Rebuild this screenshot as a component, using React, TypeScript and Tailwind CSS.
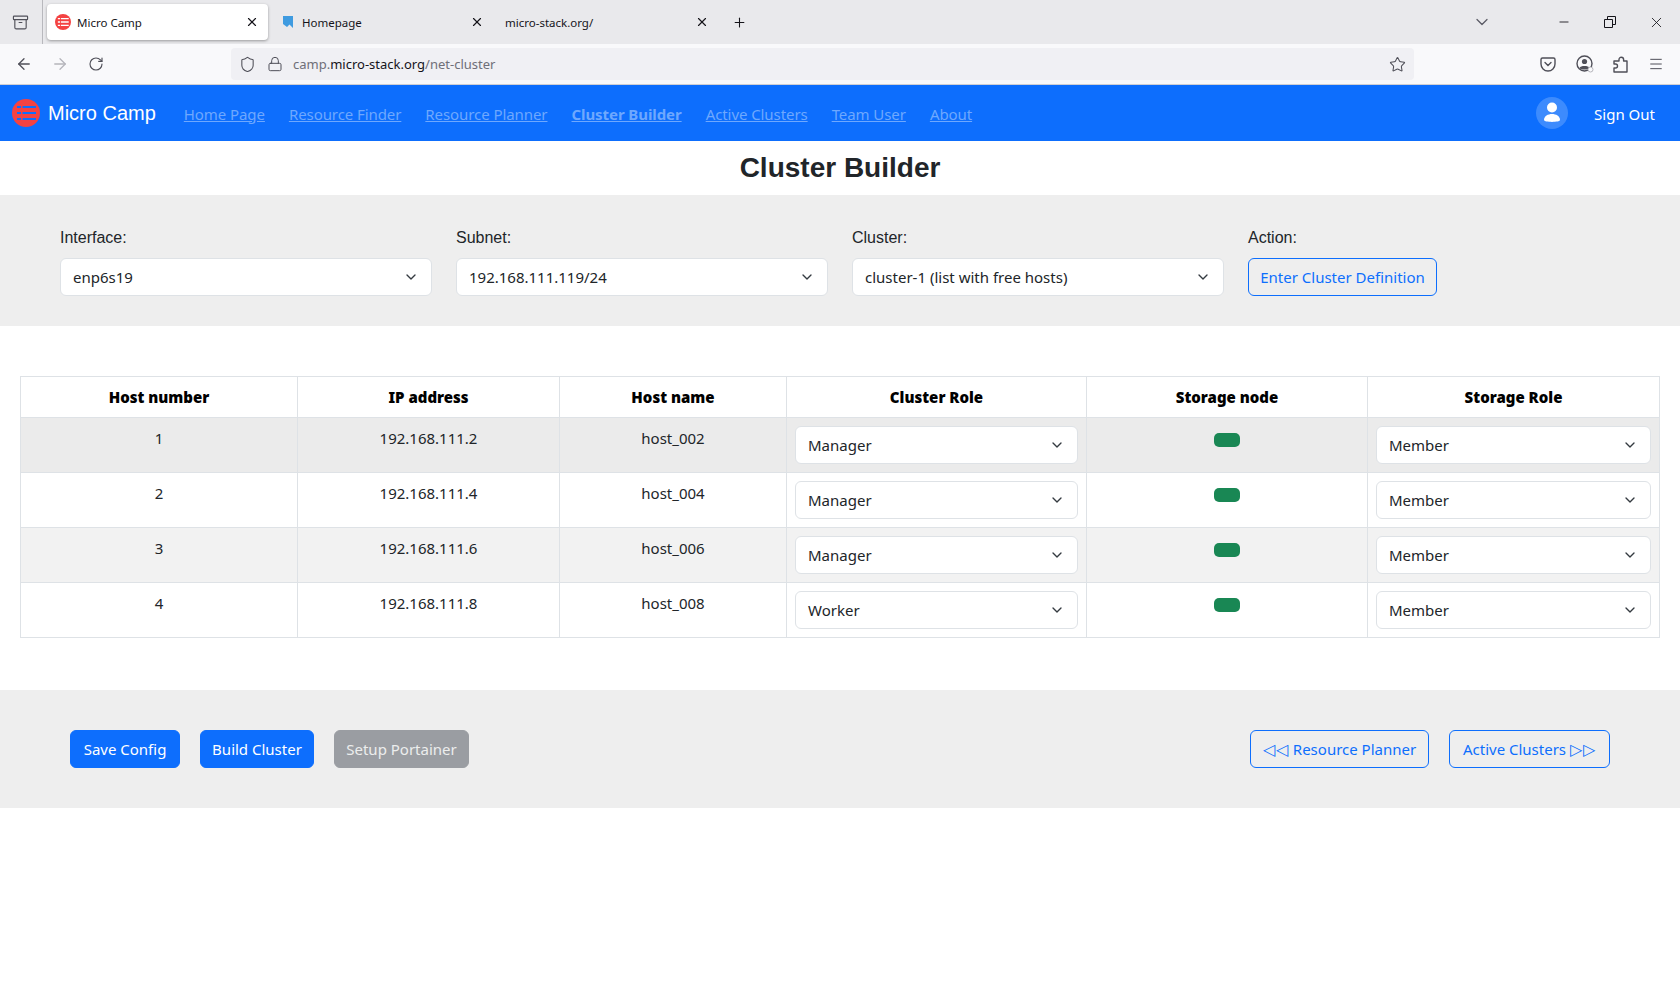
import { ChevronDown, X, Plus, Minus, ArrowLeft, ArrowRight, RotateCw, Shield, Lock, Star, Menu, Archive } from "lucide-react";

const ui = "font-['Noto_Sans',sans-serif]";

const hosts = [
  { n: 1, ip: "192.168.111.2", name: "host_002", role: "Manager", bg: "bg-[#ebebeb]" },
  { n: 2, ip: "192.168.111.4", name: "host_004", role: "Manager", bg: "bg-white" },
  { n: 3, ip: "192.168.111.6", name: "host_006", role: "Manager", bg: "bg-[#f2f2f2]" },
  { n: 4, ip: "192.168.111.8", name: "host_008", role: "Worker", bg: "bg-white" },
];

function Logo({ size, lines }: { size: number; lines: string }) {
  return (
    <svg width={size} height={size} viewBox="0 0 28 28" className="shrink-0">
      <circle cx="14" cy="14" r="14" fill="#f44242" />
      <g stroke={lines} strokeWidth="2.2">
        <path d="M10.500 8h13.500M10.500 14h13.500M10.500 20h13.500" />
        <path d="M5 8h4M5 14h4M5 20h4" />
      </g>
    </svg>
  );
}

function Tab({ active, icon, title }: { active?: boolean; icon?: React.ReactNode; title: string }) {
  return (
    <div
      className={`flex h-9 w-[221px] items-center rounded pl-2 pr-2 ${
        active ? "bg-white shadow-[0_1px_3px_rgba(0,0,0,0.35)]" : ""
      }`}
    >
      {icon && <span className="mr-1.5 flex w-4 justify-center">{icon}</span>}
      <span className="flex-1 pt-px text-[11.5px] text-[#15141a]">{title}</span>
      <X size={14} strokeWidth={2} className="mr-[1px] text-[#15141a]" />
    </div>
  );
}

function Select({ value }: { value: string }) {
  return (
    <div className="flex h-[38px] w-full items-center justify-between rounded-md border border-[#dee2e6] bg-white pl-3 pr-3 text-[15px] text-[#212529]">
      <span>{value}</span>
      <ChevronDown size={16} strokeWidth={2} className="text-[#343a40]" />
    </div>
  );
}

function Btn({ children, kind, width }: { children: React.ReactNode; kind: "primary" | "outline" | "disabled"; width: string }) {
  const cls =
    kind === "primary"
      ? "border-[#0d6efd] bg-[#0d6efd] text-white"
      : kind === "disabled"
        ? "border-[#9a9da2] bg-[#9a9da2] text-[#eceded]"
        : "border-[#0d6efd] text-[#0d6efd]";
  return (
    <div className={`flex h-[38px] items-center justify-center whitespace-nowrap rounded-md border text-[15px] ${width} ${cls}`}>
      {children}
    </div>
  );
}

export default function App() {
  const links = ["Home Page", "Resource Finder", "Resource Planner", "Cluster Builder", "Active Clusters", "Team User", "About"];
  return (
    <div className={`min-h-[1002px] bg-white ${ui}`}>
      {/* browser tabs */}
      <div className="flex h-11 items-center bg-[#e9e9ec]">
        <div className="flex h-full w-[43px] items-center justify-center border-r border-[#b8b8bd] pr-[2px]">
          <Archive size={17} strokeWidth={1.6} className="text-[#4f4f58]" />
        </div>
        <div className="ml-1 flex gap-1">
          <Tab active title="Micro Camp" icon={<Logo size={16} lines="#ffffff" />} />
          <Tab
            title="Homepage"
            icon={
              <svg width="12" height="14" viewBox="0 0 12 14">
                <path d="M1 1h10v12L7.500 9.500 5 12 1 9z" fill="#3f9be0" />
              </svg>
            }
          />
          <Tab title="micro-stack.org/" />
        </div>
        <Plus size={15} strokeWidth={1.7} className="ml-[14px] text-[#15141a]" />
        <ChevronDown size={20} strokeWidth={1.5} className="ml-[725px] text-[#5b5b66]" />
        <Minus size={14} strokeWidth={1.5} className="ml-[65px] text-[#15141a]" />
        <svg width="12" height="12" viewBox="0 0 12 12" fill="none" stroke="#15141a" className="ml-[33px]">
          <path d="M.5 3.500h8v8h-8zM3.500 3.500v-3h8v8h-3" />
        </svg>
        <X size={17} strokeWidth={1.2} className="ml-[32px] text-[#15141a]" />
      </div>

      {/* browser toolbar */}
      <div className="flex h-[41px] items-center border-b border-[#cfcfd4] bg-[#f9f9fb]">
        <ArrowLeft size={18} strokeWidth={1.7} className="ml-[15px] text-[#4f4f58]" />
        <ArrowRight size={18} strokeWidth={1.7} className="ml-[18px] text-[#b5b5bb]" />
        <RotateCw size={16} strokeWidth={1.7} className="ml-[19px] text-[#4f4f58]" />
        <div className="ml-[127px] flex h-8 w-[1183px] items-center rounded bg-[#f0f0f4] pl-2 pr-2">
          <Shield size={17} strokeWidth={1.5} className="text-[#4f4f58]" />
          <Lock size={16} strokeWidth={1.5} className="ml-[11px] text-[#4f4f58]" />
          <span className="ml-[10px] flex-1 pt-0.5 text-[13px] text-[#6f6f78]">
            camp.<span className="text-[#15141a]">micro-stack.org</span>/net-cluster
          </span>
          <Star size={17} strokeWidth={1.5} className="text-[#4f4f58]" />
        </div>
        <svg width="16" height="16" viewBox="0 0 16 16" fill="none" stroke="#4f4f58" strokeWidth="1.4" className="ml-[126px]">
          <path d="M2.500 2h11A1.500 1.500 0 0 1 15 3.500V8A7 7 0 0 1 1 8V3.500A1.500 1.500 0 0 1 2.500 2z" />
          <path d="M5 6.500l3 3 3-3" strokeLinecap="round" />
        </svg>
        <svg width="18" height="18" viewBox="0 0 18 18" fill="none" className="ml-5">
          <circle cx="8.500" cy="8.500" r="7.500" stroke="#4f4f58" strokeWidth="1.4" />
          <circle cx="8.500" cy="6.500" r="2.600" fill="#4f4f58" />
          <path d="M3.500 13c1-2.600 9-2.600 10 0-1.500 2-8.500 2-10 0z" fill="#4f4f58" />
          <circle cx="14.500" cy="14.500" r="2.500" fill="#f9f9fb" stroke="#b5b5bb" />
        </svg>
        <svg width="15" height="17" viewBox="0 0 15 17" fill="none" stroke="#4f4f58" strokeWidth="1.4" strokeLinejoin="round" className="ml-[19px]">
          <path d="M6 5V3.500a2.300 2.300 0 0 1 4.600 0V5H14v11H1v-4h1.500a2 2 0 0 0 0-4H1V5z" />
        </svg>
        <Menu size={16} strokeWidth={1.5} className="ml-5 text-[#4f4f58]" />
      </div>

      {/* app nav */}
      <nav className="flex h-14 items-center bg-[#0d6efd] pl-3 pr-[25px]">
        <Logo size={28} lines="#0d6efd" />
        <span className="ml-2 font-['Liberation_Sans',sans-serif] text-xl text-white">Micro Camp</span>
        <div className="ml-7 flex gap-6 pt-0.5">
          {links.map((l) => (
            <a
              key={l}
              className={`text-[15px] tracking-[-0.005em] text-[#6ea8fe] underline ${l === "Cluster Builder" ? "font-bold" : ""}`}
            >
              {l}
            </a>
          ))}
        </div>
        <div className="ml-auto flex h-8 w-8 items-center justify-center rounded-full bg-[#3d8bfd]">
          <svg width="18" height="22" viewBox="0 0 18 22" fill="white">
            <circle cx="9" cy="5.500" r="5" />
            <path d="M1 18c0-8 16-8 16 0 0 2.500-16 2.500-16 0z" />
          </svg>
        </div>
        <span className="ml-[26px] pt-0.5 text-[15px] text-white">Sign Out</span>
      </nav>

      <h1 className="flex h-[54px] items-center justify-center font-['Liberation_Sans',sans-serif] text-[28px] font-bold text-[#212529]">
        Cluster Builder
      </h1>

      {/* filters */}
      <section className="h-[131px] bg-[#eeeeee] pt-[31px]">
        <div className="mx-12 grid grid-cols-4">
          {[
            ["Interface:", "enp6s19"],
            ["Subnet:", "192.168.111.119/24"],
            ["Cluster:", "cluster-1 (list with free hosts)"],
          ].map(([label, value]) => (
            <div key={label} className="px-3">
              <div className="mb-2 font-['Liberation_Sans',sans-serif] text-base leading-6 text-[#212529]">{label}</div>
              <Select value={value} />
            </div>
          ))}
          <div className="px-3">
            <div className="mb-2 font-['Liberation_Sans',sans-serif] text-base leading-6 text-[#212529]">Action:</div>
            <div className="flex">
              <Btn kind="outline" width="w-[189px]">Enter Cluster Definition</Btn>
            </div>
          </div>
        </div>
      </section>

      {/* hosts */}
      <div className="px-5 pt-[50px]">
        <table className="w-[1639px] table-fixed border-collapse text-[15px] text-[#212529]">
          <colgroup>
            <col className="w-[277px]" />
            <col className="w-[262px]" />
            <col className="w-[227px]" />
            <col className="w-[300px]" />
            <col className="w-[281px]" />
            <col className="w-[292px]" />
          </colgroup>
          <thead>
            <tr className="h-[41px]">
              {["Host number", "IP address", "Host name", "Cluster Role", "Storage node", "Storage Role"].map((h) => (
                <th key={h} className="border border-[#dee2e6] text-center align-middle font-black text-black">
                  {h}
                </th>
              ))}
            </tr>
          </thead>
          <tbody>
            {hosts.map((h) => (
              <tr key={h.n} className={`h-[55px] ${h.bg}`}>
                <td className="border border-[#dee2e6] p-2 text-center align-top leading-[24px]">{h.n}</td>
                <td className="border border-[#dee2e6] p-2 text-center align-top leading-[24px]">{h.ip}</td>
                <td className="border border-[#dee2e6] p-2 text-center align-top leading-[24px]">{h.name}</td>
                <td className="border border-[#dee2e6] p-2 align-top">
                  <Select value={h.role} />
                </td>
                <td className="border border-[#dee2e6] p-2 align-top">
                  <div className="mx-auto mt-[7px] h-3.5 w-[26px] rounded-[5px] bg-[#198754]" />
                </td>
                <td className="border border-[#dee2e6] p-2 align-top">
                  <Select value="Member" />
                </td>
              </tr>
            ))}
          </tbody>
        </table>
      </div>

      {/* actions */}
      <section className="mt-[52px] flex h-[118px] items-center justify-between bg-[#eeeeee] pl-[70px] pr-[70px]">
        <div className="flex gap-5">
          <Btn kind="primary" width="w-[110px]">Save Config</Btn>
          <Btn kind="primary" width="w-[114px]">Build Cluster</Btn>
          <Btn kind="disabled" width="w-[135px]">Setup Portainer</Btn>
        </div>
        <div className="flex gap-5">
          <Btn kind="outline" width="w-[179px]">
            <span className="mr-1 text-[16px] leading-none tracking-[1px]">◁◁</span>Resource Planner
          </Btn>
          <Btn kind="outline" width="w-[161px]">
            Active Clusters<span className="ml-1 text-[16px] leading-none tracking-[1px]">▷▷</span>
          </Btn>
        </div>
      </section>
    </div>
  );
}
